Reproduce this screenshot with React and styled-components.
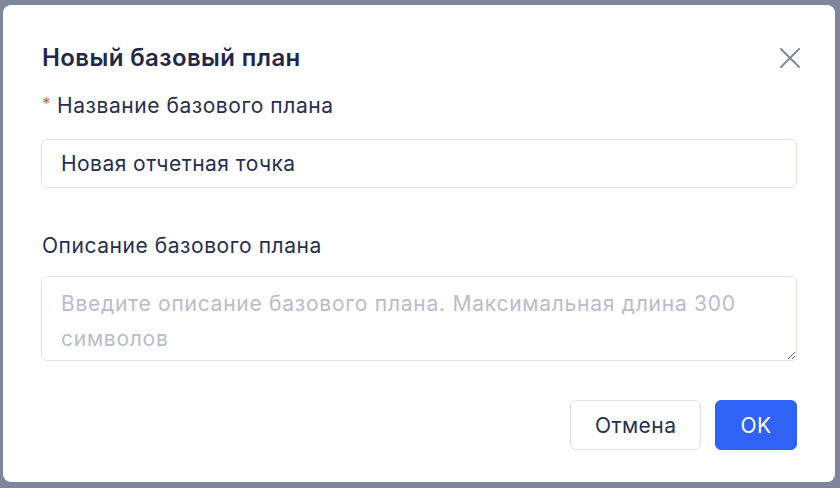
import React from 'react';
import styled, { createGlobalStyle } from 'styled-components';

const Global = createGlobalStyle`
  html, body {
    margin: 0;
    padding: 0;
    background: #7f859a;
    font-family: Inter, "Noto Sans", "Liberation Sans", sans-serif;
  }
  * { box-sizing: border-box; }
`;

const Overlay = styled.div`
  width: 840px;
  height: 488px;
  padding: 5px 5px 6px 3px;
`;

const Modal = styled.div`
  width: 832px;
  height: 477px;
  background: #fff;
  border-radius: 8px;
  padding: 37px 38px 0 38px;
  display: flex;
  flex-direction: column;
`;

const Header = styled.div`
  display: flex;
  align-items: center;
  justify-content: space-between;
  padding-left: 1px;
`;

const Title = styled.h2`
  margin: 0;
  font-size: 24px;
  line-height: 32px;
  letter-spacing: 0.4px;
  font-weight: 600;
  color: #1f2849;
`;

const CloseButton = styled.button`
  border: 0;
  background: none;
  padding: 0;
  margin-right: -4px;
  width: 22px;
  height: 22px;
  display: flex;
  align-items: center;
  justify-content: center;
  cursor: pointer;
`;

const Label = styled.label`
  display: block;
  font-size: 21px;
  line-height: 28px;
  letter-spacing: 0.55px;
  color: #262f4f;
  padding-left: 1px;
  margin-top: ${(p) => p.$top}px;
  margin-bottom: ${(p) => p.$bottom}px;
`;

const Required = styled.span`
  color: #e8572f;
  margin-right: 6px;
  font-size: 17px;
  vertical-align: 3px;
`;

const Input = styled.input`
  width: 100%;
  height: 49px;
  border: 1px solid #dfe1e7;
  border-radius: 6px;
  padding: 0 19px;
  font-family: inherit;
  font-size: 21px;
  letter-spacing: 0.45px;
  color: #262f4f;
  outline: none;
`;

const TextArea = styled.textarea`
  display: block;
  width: 100%;
  height: 85px;
  border: 1px solid #dfe1e7;
  border-radius: 6px;
  padding: 9px 19px;
  font-family: inherit;
  font-size: 21px;
  letter-spacing: 0.75px;
  line-height: 35px;
  color: #262f4f;
  outline: none;
  resize: vertical;

  &::placeholder {
    color: #b9bdcb;
  }
`;

const Footer = styled.div`
  margin-top: 39px;
  display: flex;
  justify-content: flex-end;
  gap: 14px;
`;

const Button = styled.button`
  height: 50px;
  padding: 0 ${(p) => (p.$primary ? 24.5 : 23.5)}px;
  border-radius: 6px;
  font-family: inherit;
  font-size: 21px;
  letter-spacing: 0.45px;
  cursor: pointer;
  border: 1px solid ${(p) => (p.$primary ? '#2f62f6' : '#dfe1e7')};
  background: ${(p) => (p.$primary ? '#2f62f6' : '#fff')};
  color: ${(p) => (p.$primary ? '#fff' : '#262f4f')};
  box-shadow: 0 2px 0 rgba(0, 0, 0, 0.02);
`;

export default function App() {
  return (
    <>
      <Global />
      <Overlay>
        <Modal>
          <Header>
            <Title>Новый базовый план</Title>
            <CloseButton aria-label="Закрыть">
              <svg width="20" height="20" viewBox="0 0 20 20" fill="none">
                <path d="M1 1L19 19M19 1L1 19" stroke="#80869b" strokeWidth="2" strokeLinecap="round" />
              </svg>
            </CloseButton>
          </Header>
          <Label $top={16} $bottom={19}>
            <Required>*</Required>Название базового плана
          </Label>
          <Input defaultValue="Новая отчетная точка" />
          <Label $top={44} $bottom={16}>Описание базового плана</Label>
          <TextArea placeholder="Введите описание базового плана. Максимальная длина 300 символов" />
          <Footer>
            <Button>Отмена</Button>
            <Button $primary>OK</Button>
          </Footer>
        </Modal>
      </Overlay>
    </>
  );
}
